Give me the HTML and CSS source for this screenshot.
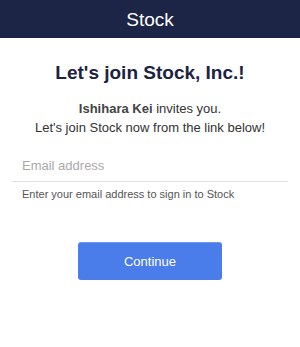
FILE: index.html
```html
<!DOCTYPE html>
<html lang="en">
<head>
<meta charset="utf-8">
<title>Stock</title>
<link rel="stylesheet" href="styles.css">
</head>
<body>
<header class="topbar">Stock</header>
<main class="content">
  <h1 class="title">Let's join Stock, Inc.!</h1>
  <p class="invite"><strong>Ishihara Kei</strong> invites you.<br>Let's join Stock now from the link below!</p>
  <form class="form">
    <input class="email" type="email" placeholder="Email address">
    <p class="hint">Enter your email address to sign in to Stock</p>
    <button class="continue" type="button">Continue</button>
  </form>
</main>
</body>
</html>
```
FILE: styles.css
```css
* { box-sizing: border-box; }
html, body {
  margin: 0;
  padding: 0;
  background: #ffffff;
  font-family: "Liberation Sans", Arial, sans-serif;
}
.topbar {
  height: 38px;
  background: #1c2546;
  color: #ffffff;
  font-size: 19px;
  display: flex;
  align-items: center;
  justify-content: center;
  padding-top: 1px;
}
.content {
  display: flex;
  flex-direction: column;
  align-items: center;
}
.title {
  margin: 24px 0 0;
  font-size: 19px;
  line-height: 22px;
  font-weight: bold;
  color: #1b2341;
  text-align: center;
}
.invite {
  margin: 15px 0 0;
  font-size: 13px;
  line-height: 19px;
  color: #333333;
  text-align: center;
}
.invite strong {
  color: #444444;
}
.form {
  align-self: stretch;
  margin: 14px 12px 0;
  display: flex;
  flex-direction: column;
}
.email {
  height: 31px;
  border: 0;
  border-bottom: 1px solid #e0e0e0;
  padding: 0 10px 2px;
  margin: 0;
  font-family: inherit;
  font-size: 13px;
  color: #333333;
  outline: none;
  background: transparent;
}
.email::placeholder {
  color: #a9a9a9;
}
.hint {
  margin: 6px 0 0;
  padding: 0 10px;
  font-size: 11px;
  line-height: 13px;
  color: #555555;
}
.continue {
  align-self: center;
  margin-top: 41px;
  width: 144px;
  height: 38px;
  border: 0;
  border-top: 1px solid #6f97ef;
  border-radius: 3px;
  background: #4a7cea;
  color: #ffffff;
  font-family: inherit;
  font-size: 13px;
  padding: 0;
}
```
